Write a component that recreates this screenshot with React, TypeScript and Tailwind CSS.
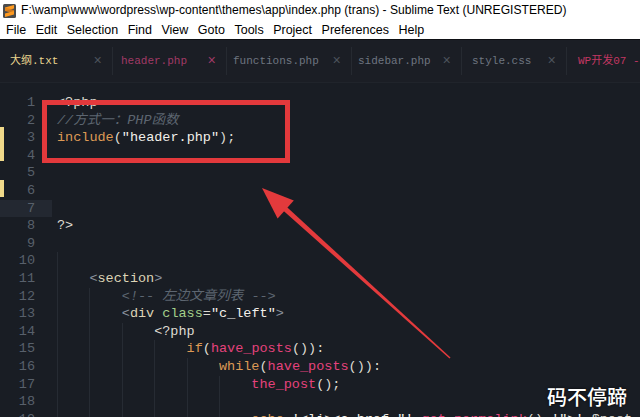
import React from "react";

type Tok = [string, string];

const W = "text-[#dedbd2]";
const G = "text-[#8a929e]";
const C = "text-[#5d6671] italic";
const O = "text-[#dd9a55]";
const P = "text-[#e5427c]";
const T = "text-[#ddd4b6]";
const A = "text-[#a3cf8a]";
const S = "text-[#f2f0ea]";

// indent = number of leading spaces, guides = first column with a guide (-1 = none)
const lines: { indent: number; guides: number; toks: Tok[] }[] = [
  { indent: 0, guides: -1, toks: [["<?php", W]] },
  { indent: 0, guides: -1, toks: [["//方式一：PHP函数", C]] },
  { indent: 0, guides: -1, toks: [["include", O], ["(", W], ['"header.php"', S], [");", W]] },
  { indent: 0, guides: -1, toks: [] },
  { indent: 0, guides: -1, toks: [] },
  { indent: 0, guides: -1, toks: [] },
  { indent: 0, guides: -1, toks: [] },
  { indent: 0, guides: -1, toks: [["?>", W]] },
  { indent: 0, guides: -1, toks: [] },
  { indent: 4, guides: 0, toks: [] },
  { indent: 4, guides: 0, toks: [["<", G], ["section", T], [">", G]] },
  { indent: 8, guides: 0, toks: [["<!-- 左边文章列表 -->", C]] },
  {
    indent: 8,
    guides: 0,
    toks: [["<", G], ["div", T], [" ", W], ["class", A], ["=", W], ['"c_left"', S], [">", G]],
  },
  { indent: 12, guides: 0, toks: [["<?php", W]] },
  { indent: 16, guides: 0, toks: [["if", O], ["(", W], ["have_posts", P], ["()):", W]] },
  { indent: 20, guides: 0, toks: [["while", O], ["(", W], ["have_posts", P], ["()):", W]] },
  { indent: 24, guides: 0, toks: [["the_post", P], ["();", W]] },
  { indent: 24, guides: 0, toks: [] },
  {
    indent: 24,
    guides: 0,
    toks: [
      ["echo", O],
      [" ", W],
      ["'<li><a href=\"'", S],
      [".", W],
      ["get_permalink", P],
      ["()", W],
      [".", W],
      ["'\">'", S],
      [".", W],
      ["$post", W],
    ],
  },
];

const tabs = [
  { label: "大纲.txt", w: "w-[113px]", pl: "pl-[10px]", color: "text-[#e9d58f]", x: "text-[#4d535c]" },
  { label: "header.php", w: "w-[114px]", pl: "pl-[8px]", color: "text-[#a13a66]", x: "text-[#a13a66]" },
  { label: "functions.php", w: "w-[125px]", pl: "pl-[6px]", color: "text-[#6e7580]", x: "text-[#4d535c]" },
  { label: "sidebar.php", w: "w-[110px]", pl: "pl-[6px]", color: "text-[#6e7580]", x: "text-[#4d535c]" },
  { label: "style.css", w: "w-[105px]", pl: "pl-[10px]", color: "text-[#6e7580]", x: "text-[#4d535c]" },
];

const menus = ["File", "Edit", "Selection", "Find", "View", "Goto", "Tools", "Project", "Preferences", "Help"];

const SublimeIcon = () => (
  <svg width="13" height="14" viewBox="0 0 13 14" className="shrink-0">
    <rect x="0" y="0" width="13" height="14" rx="1.5" fill="#4b4b4b" />
    <polygon points="2,3.5 11,1 11,4.5 2,7" fill="#ff9a1f" />
    <polygon points="2,7 11,9.5 11,6 2,3.5" fill="#e0801a" opacity="0.85" />
    <polygon points="2,9.5 11,7 11,10.5 2,13" fill="#ff9a1f" />
  </svg>
);

const CodeLine: React.FC<{ n: number; indent: number; guides: number; toks: Tok[] }> = ({
  n,
  indent,
  guides,
  toks,
}) => {
  const blocks = Math.floor(indent / 4);
  return (
    <div className="flex h-[17.6px] leading-[17.6px] whitespace-pre">
      <div
        className={`w-[52px] shrink-0 pr-[17px] text-right text-[#58606b] ${
          n === 7 ? "bg-[#232831]" : ""
        }`}
      >
        {n}
      </div>
      <div className="flex pl-[5px]">
        {Array.from({ length: blocks }).map((_, i) => (
          <span
            key={i}
            className={`inline-block h-full w-[4ch] ${
              guides >= 0 && i * 4 >= guides ? "border-l border-[#262b33]" : ""
            }`}
          />
        ))}
        <span>
          {toks.map(([t, c], i) => (
            <span key={i} className={c}>
              {t}
            </span>
          ))}
        </span>
      </div>
    </div>
  );
};

export default function App() {
  return (
    <div className="relative h-[417px] w-[640px] overflow-hidden bg-[#191d24] font-['Liberation_Sans','Noto_Sans_CJK_SC',sans-serif]">
      {/* title bar */}
      <div className="flex h-[21px] items-center gap-[5px] bg-white pl-[3px] text-[12.1px] text-black">
        <SublimeIcon />
        <span className="whitespace-nowrap">
          F:\wamp\www\wordpress\wp-content\themes\app\index.php (trans) - Sublime Text (UNREGISTERED)
        </span>
      </div>

      {/* menu bar */}
      <div className="flex h-[18px] items-center gap-[9.5px] bg-white pl-[6px] text-[12.5px] text-black">
        {menus.map((m) => (
          <span key={m}>{m}</span>
        ))}
      </div>

      {/* tabs */}
      <div className="flex h-[44px] items-center border-t border-[#0e1014] border-b border-b-[#20242b] bg-[#1b1e25] font-['Liberation_Mono','Noto_Sans_CJK_SC',monospace] text-[11px]">
        {tabs.map((t) => (
          <div
            key={t.label}
            className={`flex h-[28px] shrink-0 items-center justify-between border-r border-[#262a31] pr-[10px] ${t.w} ${t.pl}`}
          >
            <span className={t.color}>{t.label}</span>
            <span className={`text-[14px] ${t.x}`}>×</span>
          </div>
        ))}
        <div className="flex h-[28px] items-center pl-[11px]">
          <span className="whitespace-nowrap text-[#c23762]">WP开发07 - 副本</span>
        </div>
      </div>

      {/* code */}
      <div className="pt-[11px] font-['Liberation_Mono','Noto_Sans_CJK_SC',monospace] text-[13.5px]">
        {lines.map((l, i) => (
          <CodeLine key={i} n={i + 1} indent={l.indent} guides={l.guides} toks={l.toks} />
        ))}
      </div>

      {/* modified markers */}
      <div className="absolute left-0 top-[127px] h-[34px] w-[4px] bg-[#f0d98a]" />
      <div className="absolute left-0 top-[180px] h-[17px] w-[4px] bg-[#f0d98a]" />

      {/* annotation box */}
      <div className="absolute left-[42px] top-[100px] h-[63px] w-[248px] border-[5px] border-[#e3393c]" />

      {/* annotation arrow */}
      <svg className="pointer-events-none absolute left-0 top-0" width="640" height="417">
        <polygon points="450.5,357.4 449.5,358.6 282.6,210.0 286.0,206.2" fill="#e33a3c" />
        <polygon points="262,188 293.8,200.6 277.6,218.4" fill="#e33a3c" />
      </svg>

      {/* watermark */}
      <div className="absolute left-[547px] top-[382px] font-['Noto_Sans_CJK_SC',sans-serif] text-[20px] font-medium text-white [text-shadow:0_0_3px_rgba(0,0,0,0.8)]">
        码不停蹄
      </div>
    </div>
  );
}
